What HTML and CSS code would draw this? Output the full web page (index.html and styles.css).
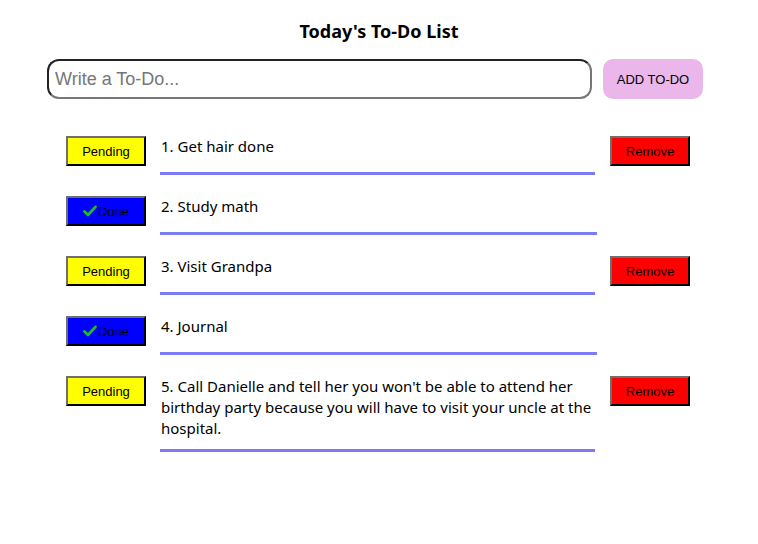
FILE: index.html
```html
<!DOCTYPE html>
<html lang="en">
<head>
<meta charset="utf-8">
<title>Today's To-Do List</title>
<link rel="stylesheet" href="styles.css">
</head>
<body>
<div class="app">
  <h1 class="title">Today's To-Do List</h1>
  <form class="form">
    <input class="input" type="text" placeholder="Write a To-Do...">
    <button class="add" type="button">ADD TO-DO</button>
  </form>
  <ul class="list">
    <li class="row">
      <button class="status pending" type="button">Pending</button>
      <div class="text">1. Get hair done</div>
      <button class="remove" type="button">Remove</button>
    </li>
    <li class="row">
      <button class="status done" type="button"><svg class="check" viewBox="0 0 14 12" width="14" height="12"><path d="M1.5 6.5 L5 10 L12.5 1.8" fill="none" stroke="#1fc01f" stroke-width="2.6" stroke-linecap="round" stroke-linejoin="round"/></svg>Done</button>
      <div class="text">2. Study math</div>
      <span class="spacer"></span>
    </li>
    <li class="row">
      <button class="status pending" type="button">Pending</button>
      <div class="text">3. Visit Grandpa</div>
      <button class="remove" type="button">Remove</button>
    </li>
    <li class="row">
      <button class="status done" type="button"><svg class="check" viewBox="0 0 14 12" width="14" height="12"><path d="M1.5 6.5 L5 10 L12.5 1.8" fill="none" stroke="#1fc01f" stroke-width="2.6" stroke-linecap="round" stroke-linejoin="round"/></svg>Done</button>
      <div class="text">4. Journal</div>
      <span class="spacer"></span>
    </li>
    <li class="row">
      <button class="status pending" type="button">Pending</button>
      <div class="text">5. Call Danielle and tell her you won't be able to attend her birthday party because you will have to visit your uncle at the hospital.</div>
      <button class="remove" type="button">Remove</button>
    </li>
  </ul>
</div>
</body>
</html>
```
FILE: styles.css
```css
* { box-sizing: border-box; }
body {
  margin: 0;
  background: #fff;
  font-family: "Noto Sans", "Open Sans", sans-serif;
  color: #000;
}
.app {
  width: 758px;
  padding-top: 20px;
}
.title {
  margin: 0;
  text-align: center;
  font-size: 18px;
  line-height: 23px;
  font-weight: bold;
}
.form {
  display: flex;
  gap: 11px;
  margin: 16px 0 0 47px;
}
.input {
  width: 545px;
  height: 40px;
  border: 2px solid #222;
  border-right-color: #777;
  border-bottom-color: #777;
  border-radius: 12px;
  padding: 0 6px;
  font-family: "Liberation Sans", Arial, sans-serif;
  font-size: 18px;
  color: #000;
  outline: none;
}
.input::placeholder { color: #767676; }
.add {
  width: 100px;
  height: 40px;
  border: none;
  border-radius: 10px;
  background: #ebb7eb;
  font-family: "Liberation Sans", Arial, sans-serif;
  font-size: 13px;
  color: #000;
  padding: 0;
}
.list {
  list-style: none;
  margin: 37px 0 0 66px;
  padding: 0;
  width: 624px;
}
.row {
  display: flex;
  margin-bottom: 21px;
}
.status, .remove {
  flex: none;
  width: 80px;
  height: 30px;
  margin-bottom: 9px;
  border: 2px outset #666;
  border-color: #6f6f6f #333 #333 #6f6f6f;
  font-family: "Liberation Sans", Arial, sans-serif;
  font-size: 13px;
  color: #000;
  padding: 0;
  display: flex;
  align-items: center;
  justify-content: center;
}
.status { margin-right: 14px; }
.remove { margin-left: 15px; background: #ff0000; }
.pending { background: #ffff00; }
.done { background: #0000ff; gap: 1px; }
.check { display: block; }
.text {
  flex: 1;
  font-size: 15px;
  line-height: 21px;
  padding: 0 0 10px 1px;
  border-bottom: 3px solid #7b7bf6;
}
.spacer {
  flex: none;
  width: 93px;
}
```
